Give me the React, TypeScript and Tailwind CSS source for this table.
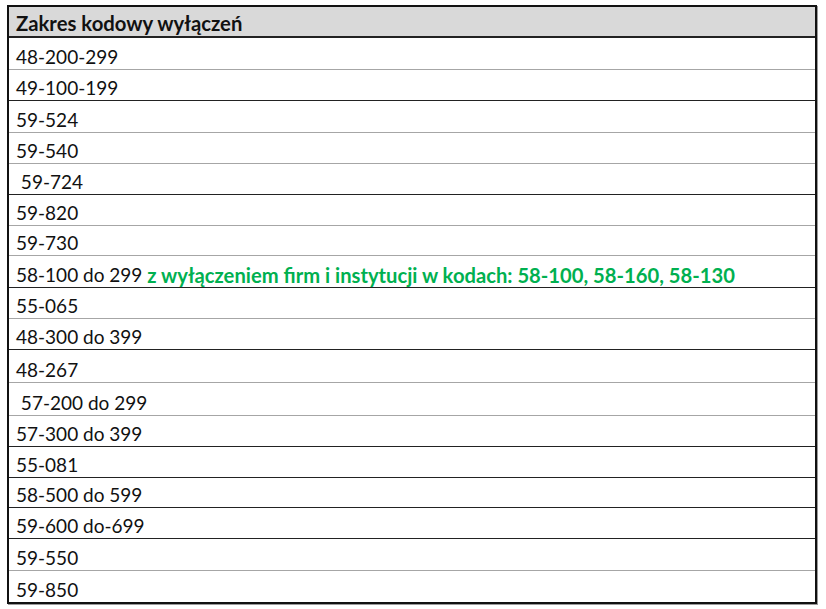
type Row = {
  code: string;
  note?: string;
  h: string;
  line: "dark" | "grey";
};

// line = colour of the border above the row
const rows: Row[] = [
  { code: "48-200-299", h: "h-[31px]", line: "dark" },
  { code: "49-100-199", h: "h-[31px]", line: "grey" },
  { code: "59-524", h: "h-[32px]", line: "dark" },
  { code: "59-540", h: "h-[31px]", line: "grey" },
  { code: "\u00a059-724", h: "h-[31px]", line: "grey" },
  { code: "59-820", h: "h-[31px]", line: "dark" },
  { code: "59-730", h: "h-[30px]", line: "grey" },
  {
    code: "58-100 do 299",
    note: "z wyłączeniem firm i instytucji w kodach: 58-100, 58-160, 58-130",
    h: "h-[32px]",
    line: "grey",
  },
  { code: "55-065", h: "h-[31px]", line: "dark" },
  { code: "48-300 do 399", h: "h-[31px]", line: "grey" },
  { code: "48-267", h: "h-[33px]", line: "dark" },
  { code: "\u00a057-200 do 299", h: "h-[33px]", line: "grey" },
  { code: "57-300 do 399", h: "h-[31px]", line: "grey" },
  { code: "55-081", h: "h-[31px]", line: "dark" },
  { code: "58-500 do 599", h: "h-[30px]", line: "dark" },
  { code: "59-600 do-699", h: "h-[31px]", line: "dark" },
  { code: "59-550", h: "h-[32px]", line: "dark" },
  { code: "59-850", h: "h-[32px]", line: "grey" },
];

export default function App() {
  return (
    <div className="w-[826px] h-[609px] bg-white pt-[5px] pl-[7px] font-['Lato',sans-serif] text-[19px] text-[#111]">
      <div className="w-[810px] border-2 border-[#111] shadow-[1px_1px_0_#9a9a9a]">
        <div className="h-[31px] bg-[#d9d9d9] border-b-2 border-[#222] flex items-end pl-[7px] pb-[2px] leading-[22px] font-bold text-[20.3px]">
          Zakres kodowy wyłączeń
        </div>
        {rows.map((r, i) => (
          <div
            key={i}
            className={`${r.h} flex items-end pl-[7px] pb-[1px] leading-[22px] whitespace-pre ${
              i === 0
                ? ""
                : r.line === "dark"
                ? "border-t border-[#222]"
                : "border-t border-[#a6a6a6]"
            }`}
          >
            <span>{r.code}</span>
            {r.note && (
              <span className="font-bold text-[20.2px] text-[#00b050]"> {r.note}</span>
            )}
          </div>
        ))}
      </div>
    </div>
  );
}
